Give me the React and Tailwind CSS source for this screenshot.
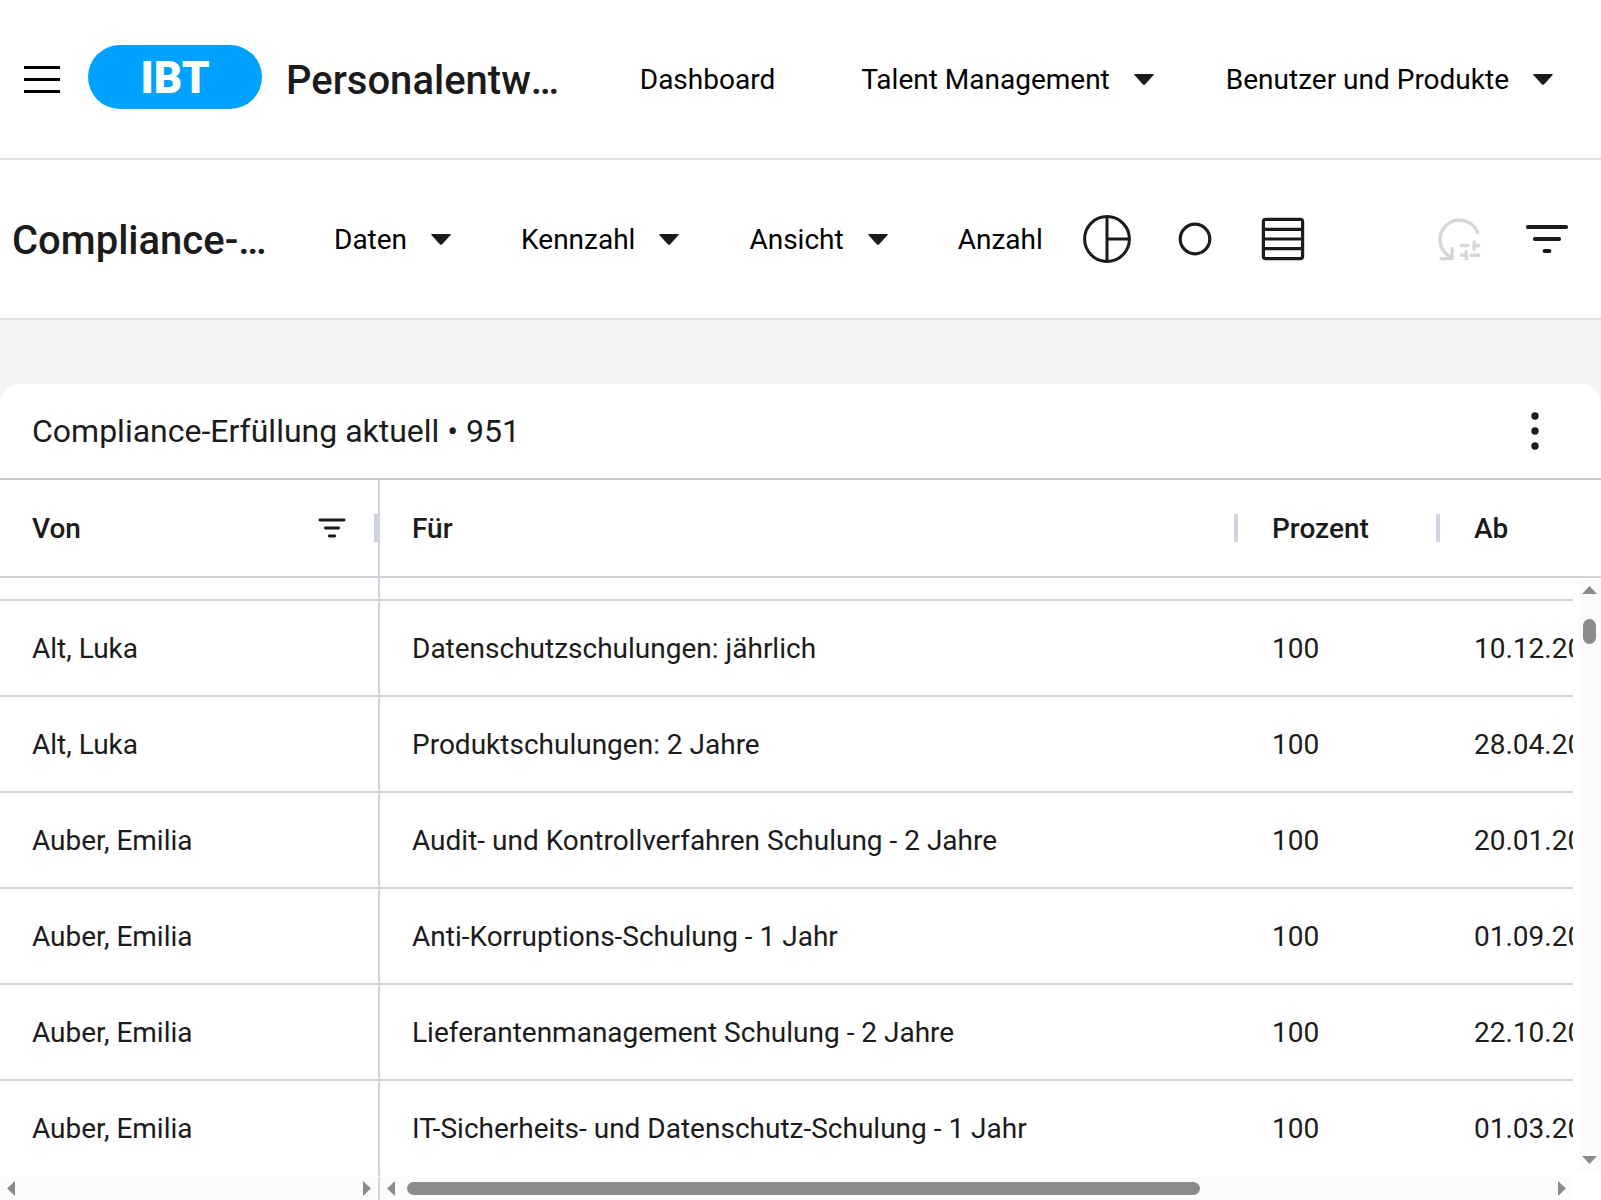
const rows = [
  { id: 1, from: "Alt, Luka", course: "Datenschutzschulungen: jährlich", percent: 100, since: "10.12.2024" },
  { id: 2, from: "Alt, Luka", course: "Produktschulungen: 2 Jahre", percent: 100, since: "28.04.2024" },
  { id: 3, from: "Auber, Emilia", course: "Audit- und Kontrollverfahren Schulung - 2 Jahre", percent: 100, since: "20.01.2024" },
  { id: 4, from: "Auber, Emilia", course: "Anti-Korruptions-Schulung - 1 Jahr", percent: 100, since: "01.09.2024" },
  { id: 5, from: "Auber, Emilia", course: "Lieferantenmanagement Schulung - 2 Jahre", percent: 100, since: "22.10.2024" },
  { id: 6, from: "Auber, Emilia", course: "IT-Sicherheits- und Datenschutz-Schulung - 1 Jahr", percent: 100, since: "01.03.2024" },
];

const MenuButton = ({ label }) => (
  <button type="button" aria-haspopup="menu" className="flex items-center gap-6 whitespace-nowrap cursor-pointer">
    <span className="pt-0.5">{label}</span>
    <svg width="20" height="11" viewBox="0 0 20 11" fill="#1b1b1b" aria-hidden="true">
      <path d="M1 0H19Q20.4 .2 19.4 1.3L11.2 10.2Q10 11.4 8.8 10.2L.6 1.3Q-.4 .2 1 0Z" />
    </svg>
  </button>
);

const PieIcon = () => (
  <svg width="48" height="48" viewBox="0 0 48 48" fill="none" stroke="#1b1b1b" strokeWidth="3" aria-hidden="true">
    <circle cx="24" cy="24" r="22.4" />
    <path d="M24 2V46M24 24H46" />
  </svg>
);

const CircleIcon = () => (
  <svg width="48" height="48" viewBox="0 0 48 48" fill="none" stroke="#1b1b1b" strokeWidth="3.2" aria-hidden="true">
    <circle cx="24" cy="24" r="14.8" />
  </svg>
);

const ListIcon = () => (
  <svg width="48" height="48" viewBox="0 0 48 48" fill="none" stroke="#1b1b1b" strokeWidth="3.2" aria-hidden="true">
    <rect x="4.4" y="4.4" width="39.2" height="39.2" rx="2.4" />
    <path d="M4 14.3H44M4 24H44M4 33.7H44" />
  </svg>
);

const ResetIcon = () => (
  <svg width="48" height="48" viewBox="0 0 48 48" fill="none" stroke="#d6d6d6" strokeWidth="3.4" strokeLinecap="round" strokeLinejoin="round" aria-hidden="true">
    <path d="M42.6 17.6A19.4 19.4 0 1 0 16.8 42.4" />
    <path d="M6 43.6H17V33.5" />
    <path d="M26.3 30.5H33M39.2 27V34.2M39.5 30.5H43.7" />
    <path d="M26.3 40.3H31M31.2 36.8V43.8M36.3 40.3H43.7" />
  </svg>
);

const FilterIcon = () => (
  <svg width="48" height="48" viewBox="0 0 48 48" fill="none" stroke="#1b1b1b" strokeWidth="3.8" strokeLinecap="round" aria-hidden="true">
    <path d="M4.8 12H43.2M11.8 24H36.2M21.5 36H26.5" />
  </svg>
);

const SmallFilterIcon = () => (
  <svg width="28" height="28" viewBox="0 0 28 28" fill="none" stroke="#1b1b1b" strokeWidth="2.8" strokeLinecap="round" aria-hidden="true">
    <path d="M1.9 6H26.1M7.4 14H20.6M11.3 22H16.7" />
  </svg>
);

const Arrow = ({ d, vertical }) => (
  <svg width={vertical ? 15 : 8} height={vertical ? 8 : 15} fill="#8b8b8b" className="shrink-0" aria-hidden="true">
    <path d={d} />
  </svg>
);

const ArrowLeft = () => <Arrow d="M8 0V15L0 7.5Z" />;
const ArrowRight = () => <Arrow d="M0 0V15L8 7.5Z" />;

const HeaderCell = ({ label, filter, pinned, resizable = true }) => (
  <th scope="col" className={`h-[98px] p-0 pl-8 border-b-2 border-[#ced4da] font-medium text-left ${pinned ? "border-r-2" : "pr-0.5"}`}>
    <div className="flex items-center">
      <span className="flex-1 pt-0.5">{label}</span>
      {filter && (
        <button type="button" aria-label="Filter" className="mr-7 cursor-pointer">
          <SmallFilterIcon />
        </button>
      )}
      {resizable && <span className="w-1 h-7 bg-[#ced4de]" />}
    </div>
  </th>
);

const cell = "p-0 pl-8 border-b-2 border-[#ced4da] whitespace-nowrap overflow-hidden";

const App = () => {
  return (
    <div className="min-h-screen flex flex-col overflow-hidden bg-[#f4f4f4] text-[28px] leading-8 text-[#1b1b1b] font-[Roboto,sans-serif]">
      <header className="h-40 flex items-center bg-white border-b-2 border-[#dee2e6] pl-6 pr-12 text-black">
        <button type="button" aria-label="Menü" className="w-9 flex flex-col gap-[9px] shrink-0 cursor-pointer">
          <span className="h-[3px] bg-black" />
          <span className="h-[3px] bg-black" />
          <span className="h-[3px] bg-black" />
        </button>
        <a href="#" className="ml-7 mb-1 pt-0.5 w-[174px] h-16 shrink-0 rounded-[32px] bg-[#00a2ff] flex items-center justify-center text-white text-[44px] font-black">
          IBT
        </a>
        <h1 className="ml-6 pt-1 w-[280px] shrink-0 truncate text-[40px] leading-[48px] font-medium text-[#1b1b1b]">Personalentwicklung</h1>
        <nav className="ml-auto flex items-center">
          <a href="#" className="mr-[86px] pt-0.5">Dashboard</a>
          <div className="flex items-center gap-[72px]">
            <MenuButton label="Talent Management" />
            <MenuButton label="Benutzer und Produkte" />
          </div>
        </nav>
      </header>

      <div className="h-40 flex items-center bg-white border-b-2 border-[#dee2e6] pl-3 pr-[30px] text-black">
        <h2 className="pt-1 w-[262px] shrink-0 truncate text-[40px] leading-[48px] font-medium text-[#1b1b1b]">Compliance-Erfüllung</h2>
        <div className="ml-[60px] flex items-center gap-[70px]">
          <MenuButton label="Daten" />
          <MenuButton label="Kennzahl" />
          <MenuButton label="Ansicht" />
          <span className="pt-0.5">Anzahl</span>
        </div>
        <div className="ml-10 flex items-center gap-10">
          <button type="button" aria-label="Kreisdiagramm" className="cursor-pointer"><PieIcon /></button>
          <button type="button" aria-label="Ring" className="cursor-pointer"><CircleIcon /></button>
          <button type="button" aria-label="Liste" className="cursor-pointer"><ListIcon /></button>
        </div>
        <div className="ml-auto flex items-center gap-10">
          <button type="button" aria-label="Filter zurücksetzen" disabled><ResetIcon /></button>
          <button type="button" aria-label="Filter" className="cursor-pointer"><FilterIcon /></button>
        </div>
      </div>

      <main className="mt-16 flex-1 flex flex-col bg-white rounded-t-[20px] overflow-hidden">
        <div className="h-24 flex items-center justify-between px-8 border-b-2 border-[#ccc]">
          <h3 className="text-[32px] leading-10">Compliance-Erfüllung aktuell • 951</h3>
          <button type="button" aria-label="Mehr" className="w-[68px] flex justify-center cursor-pointer">
            <svg width="8" height="40" viewBox="0 0 8 40" fill="#1b1b1b" aria-hidden="true">
              <circle cx="4" cy="5" r="3.7" />
              <circle cx="4" cy="20" r="3.7" />
              <circle cx="4" cy="35" r="3.7" />
            </svg>
          </button>
        </div>

        <div className="relative flex-1">
          <table className="w-full table-fixed border-separate border-spacing-0">
            <colgroup>
              <col className="w-[380px]" />
              <col className="w-[860px]" />
              <col className="w-[202px]" />
              <col />
            </colgroup>
            <thead>
              <tr>
                <HeaderCell label="Von" filter pinned />
                <HeaderCell label="Für" />
                <HeaderCell label="Prozent" />
                <HeaderCell label="Ab" resizable={false} />
              </tr>
            </thead>
            <tbody>
              {/* tail of the row that is scrolled out at the top */}
              <tr className="h-[23px]">
                <td className={`${cell} border-r-2`} />
                <td className={cell} />
                <td className={cell} />
                <td className={cell} />
              </tr>
              {rows.map((row) => (
                <tr key={row.id} className="h-24 *:pt-0.5 last:*:border-b-transparent">
                  <td className={`${cell} border-r-2`}>{row.from}</td>
                  <td className={cell}>{row.course}</td>
                  <td className={cell}>{row.percent}</td>
                  <td className={cell}>{row.since}</td>
                </tr>
              ))}
            </tbody>
          </table>

          {/* vertical scrollbar */}
          <div className="absolute top-[98px] bottom-0 right-0 w-7 pl-[5px] pb-[5px] bg-white">
            <div className="h-full bg-[#fcfcfc] flex flex-col items-center py-2">
              <Arrow vertical d="M0 8H15L7.5 0Z" />
              <div className="mt-[25px] w-[13px] h-[25px] rounded-full bg-[#8b8b8b]" />
              <div className="flex-1" />
              <Arrow vertical d="M0 0H15L7.5 8Z" />
            </div>
          </div>
        </div>

        {/* horizontal scrollbars */}
        <div className="flex h-[23px] pr-7">
          <div className="w-[380px] shrink-0 border-r-2 border-[#ced4da] bg-[#fcfcfc] flex items-center justify-between px-[7px]">
            <ArrowLeft />
            <ArrowRight />
          </div>
          <div className="flex-1 bg-[#fcfcfc] flex items-center px-[7px]">
            <ArrowLeft />
            <div className="ml-3 w-[793px] h-[13px] rounded-full bg-[#8b8b8b]" />
            <div className="flex-1" />
            <ArrowRight />
          </div>
        </div>
      </main>
    </div>
  );
};

export default App;
